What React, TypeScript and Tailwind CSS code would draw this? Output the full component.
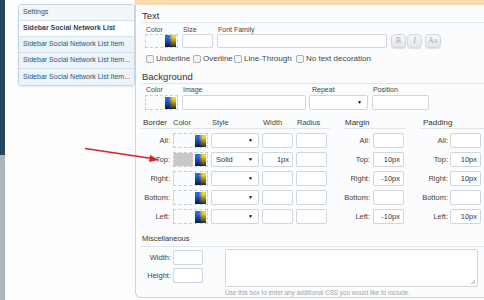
import React from "react";

const listItems = [
  { label: "Settings", kind: "plain" },
  { label: "Sidebar Social Network List", kind: "active" },
  { label: "Sidebar Social Network List Item", kind: "item" },
  { label: "Sidebar Social Network List Item...", kind: "item" },
  { label: "Sidebar Social Network List Item...", kind: "item" },
];

function Swatch() {
  return (
    <span className="block w-[11px] h-[12px] bg-[linear-gradient(to_bottom,rgba(0,0,0,0)_20%,rgba(0,10,40,0.85)),linear-gradient(to_right,#1f6fe0,#2a6ad8_35%,#f6d21e_70%)]" />
  );
}

function ColorPicker({ w, h = 14, filled = false }: { w: number; h?: number; filled?: boolean }) {
  return (
    <div
      className="flex items-center justify-between border border-dashed border-[#c9ced3] pr-[1px]"
      style={{ width: w, height: h }}
    >
      {filled ? <span className="block h-full w-[19px] bg-[#c9c9c9]" /> : <span />}
      <Swatch />
    </div>
  );
}

function Field({ w, h = 14, value, right = true }: { w: number; h?: number; value?: string; right?: boolean }) {
  return (
    <div
      className={`flex items-center border border-[#cfd6dd] bg-white rounded-[2px] text-[7.5px] text-[#333] ${
        right ? "justify-end pr-[3px]" : "pl-[4px]"
      }`}
      style={{ width: w, height: h }}
    >
      {value}
    </div>
  );
}

function Select({ w, h = 15, value }: { w: number; h?: number; value?: string }) {
  return (
    <div
      className="flex items-center justify-between border border-[#cfd6dd] bg-white rounded-[2px] pl-[4px] pr-[5px] text-[7.5px] text-[#333]"
      style={{ width: w, height: h }}
    >
      <span>{value}</span>
      <span className="text-[5px] text-black">▼</span>
    </div>
  );
}

function Check({ label, w }: { label: string; w?: number }) {
  return (
    <div className="flex items-center gap-[2px]" style={w ? { width: w } : undefined}>
      <span className="block w-[8px] h-[8px] border border-[#a9b0b6] rounded-[2px] bg-[#f4f5f6]" />
      <span className="text-[8px] text-[#444]">{label}</span>
    </div>
  );
}

function FmtBtn({ children, w = 15 }: { children: React.ReactNode; w?: number }) {
  return (
    <div
      className="flex items-center justify-center h-[14px] rounded-[4px] border border-[#d3d6da] bg-[linear-gradient(#f6f7f9,#e3e6ea)] shadow-[0_1px_1px_rgba(0,0,0,0.12)] text-[8px] text-[#a3a8ae] font-['Liberation_Serif',serif]"
      style={{ width: w }}
    >
      {children}
    </div>
  );
}

const borderRows = [
  { label: "All:", filled: false, style: "", width: "", margin: "", padding: "" },
  { label: "Top:", filled: true, style: "Solid", width: "1px", margin: "10px", padding: "10px" },
  { label: "Right:", filled: false, style: "", width: "", margin: "-10px", padding: "10px" },
  { label: "Bottom:", filled: false, style: "", width: "", margin: "", padding: "" },
  { label: "Left:", filled: false, style: "", width: "", margin: "-10px", padding: "10px" },
];

export default function App() {
  return (
    <div className="relative w-[484px] h-[300px] overflow-hidden flex bg-[#fdfdfe] font-['Liberation_Sans',Arial,sans-serif] text-[#333]">
      {/* far left strip */}
      <div className="w-[5px] flex flex-col">
        <div className="h-[155px] bg-[#26465f]" />
        <div className="flex-1 bg-[#aeb6bd]" />
      </div>

      {/* sidebar list */}
      <div className="w-[130px] pt-[4px] pl-[13px]">
        <div className="border border-[#c6d5e1] rounded-[3px] shadow-[0_1px_2px_rgba(0,0,0,0.08)] overflow-hidden">
          {listItems.map((it, i) => (
            <div
              key={i}
              className={`h-[16px] flex items-center pl-[4px] text-[7px] whitespace-nowrap ${
                i < listItems.length - 1 ? "border-b border-[#d7e3ec]" : ""
              } ${
                it.kind === "plain"
                  ? "bg-[#f1f6fa] text-[#4a4a4a]"
                  : it.kind === "active"
                  ? "bg-white text-[#1f4668] font-bold"
                  : "bg-[#ecf3f9] text-[#2d5779]"
              }`}
            >
              {it.label}
            </div>
          ))}
        </div>
      </div>

      {/* main panel */}
      <div className="flex-1 flex flex-col border-l border-b border-[#c7d6e1] rounded-bl-[6px] bg-[#fbfcfd] h-[298px]">
        <div className="h-[6px] bg-[#f8dbae]" />
        <div className="pl-[5px] flex flex-col">
          {/* Text */}
          <div className="pt-[5px] leading-[12px] text-[9.5px] text-[#333] border-b border-[#e2e6ea] pl-[1px]">Text</div>
          <div className="mt-[3px] h-[8px] leading-[8px] flex text-[7px] text-[#444] pl-[4px]">
            <span className="w-[37px] pl-[1px]">Color</span>
            <span className="w-[35px] pl-[1px]">Size</span>
            <span className="pl-[1px]">Font Family</span>
          </div>
          <div className="flex items-center pl-[4px] gap-[4px]">
            <ColorPicker w={33} />
            <Field w={31} />
            <Field w={170} />
            <div className="flex gap-[1px]">
              <FmtBtn>B</FmtBtn>
              <FmtBtn>
                <i>I</i>
              </FmtBtn>
              <span className="w-[1px]" />
              <FmtBtn w={16}>
                A<span className="text-[5.5px]">A</span>
              </FmtBtn>
            </div>
          </div>
          <div className="mt-[5px] h-[12px] flex items-center pl-[5px]">
            <Check label="Underline" w={47} />
            <Check label="Overline" w={41} />
            <Check label="Line-Through" w={62} />
            <Check label="No text decoration" />
          </div>

          {/* Background */}
          <div className="pt-[6px] leading-[12px] text-[9.5px] text-[#333] border-b border-[#e2e6ea] pl-[1px]">
            Background
          </div>
          <div className="mt-[2px] h-[8px] leading-[8px] flex text-[7px] text-[#444] pl-[4px]">
            <span className="w-[37px] pl-[1px]">Color</span>
            <span className="w-[127px] pl-[1px]">Image</span>
            <span className="w-[63px] pl-[3px]">Repeat</span>
            <span className="pl-[1px]">Position</span>
          </div>
          <div className="mt-[1px] flex items-center pl-[4px]">
            <ColorPicker w={33} h={15} />
            <div className="ml-[4px]">
              <Field w={124} h={15} />
            </div>
            <div className="ml-[3px]">
              <Select w={59} />
            </div>
            <div className="ml-[4px]">
              <Field w={57} h={15} />
            </div>
          </div>

          {/* Border / Margin / Padding */}
          <div className="flex">
            <div className="w-[189px] flex flex-col">
              <div className="pt-[8px] h-[19px] leading-[10px] flex text-[7.5px] border-b border-[#e2e6ea] pl-[2px]">
                <span className="w-[30px] text-[8px] text-[#333]">Border</span>
                <span className="w-[39px] text-[#444]">Color</span>
                <span className="w-[51px] text-[#444]">Style</span>
                <span className="w-[34px] text-[#444]">Width</span>
                <span className="text-[#444]">Radius</span>
              </div>
              <div className="mt-[4px] flex flex-col gap-[4px]">
                {borderRows.map((r) => (
                  <div key={r.label} className="flex items-center h-[15px]">
                    <span className="w-[29px] text-right text-[7.5px] text-[#444]">{r.label}</span>
                    <div className="ml-[3px]">
                      <ColorPicker w={35} h={15} filled={r.filled} />
                    </div>
                    <div className="ml-[3px]">
                      <Select w={48} value={r.style} />
                    </div>
                    <div className="ml-[3px]">
                      <Field w={31} h={15} value={r.width} />
                    </div>
                    <div className="ml-[3px]">
                      <Field w={31} h={15} />
                    </div>
                  </div>
                ))}
              </div>
            </div>

            <div className="ml-[14px] w-[62px] flex flex-col">
              <div className="pt-[8px] h-[19px] leading-[10px] text-[8px] text-[#333] border-b border-[#e2e6ea] pl-[1px]">
                Margin
              </div>
              <div className="mt-[4px] flex flex-col gap-[4px]">
                {borderRows.map((r) => (
                  <div key={r.label} className="flex items-center h-[15px]">
                    <span className="w-[26px] text-right text-[7.5px] text-[#444]">{r.label}</span>
                    <div className="ml-[3px]">
                      <Field w={31} h={15} value={r.margin} />
                    </div>
                  </div>
                ))}
              </div>
            </div>

            <div className="ml-[14px] flex-1 flex flex-col">
              <div className="pt-[8px] h-[19px] leading-[10px] text-[8px] text-[#333] border-b border-[#e2e6ea] pl-[3px]">
                Padding
              </div>
              <div className="mt-[4px] flex flex-col gap-[4px]">
                {borderRows.map((r) => (
                  <div key={r.label} className="flex items-center h-[15px]">
                    <span className="w-[28px] text-right text-[7.5px] text-[#444]">{r.label}</span>
                    <div className="ml-[2px]">
                      <Field w={31} h={15} value={r.padding} />
                    </div>
                  </div>
                ))}
              </div>
            </div>
          </div>

          {/* Miscellaneous */}
          <div className="pt-[10px] pb-[2px] leading-[10px] text-[7.5px] text-[#333] border-b border-[#e2e6ea] pl-[1px]">
            Miscellaneous
          </div>
          <div className="flex mt-[2px]">
            <div className="flex flex-col gap-[3px] pt-[1px]">
              <div className="flex items-center">
                <span className="w-[30px] text-right text-[7.5px] text-[#444]">Width:</span>
                <div className="ml-[2px]">
                  <Field w={30} h={15} />
                </div>
              </div>
              <div className="flex items-center">
                <span className="w-[30px] text-right text-[7.5px] text-[#444]">Height:</span>
                <div className="ml-[2px]">
                  <Field w={30} h={15} />
                </div>
              </div>
            </div>
            <div className="ml-[22px] flex flex-col">
              <div className="relative w-[253px] h-[38px] border border-[#cfd6dd] bg-white rounded-[2px]">
                <svg className="absolute right-[1px] bottom-[1px]" width="6" height="6" viewBox="0 0 6 6">
                  <path d="M5 1 L1 5 M5 3 L3 5" stroke="#999" strokeWidth="0.8" />
                </svg>
              </div>
              <div className="mt-[2px] leading-[8px] text-[6.3px] text-[#a0a4a8]">
                Use this box to enter any additional CSS you would like to include.
              </div>
            </div>
          </div>
        </div>
      </div>

      {/* annotation arrow */}
      <svg className="absolute left-0 top-0 pointer-events-none" width="484" height="300">
        <line x1="85" y1="148.5" x2="152" y2="158.5" stroke="#d62424" strokeWidth="1.6" />
        <polygon points="159,160 150,155 149,162" fill="#d62424" />
      </svg>
    </div>
  );
}
